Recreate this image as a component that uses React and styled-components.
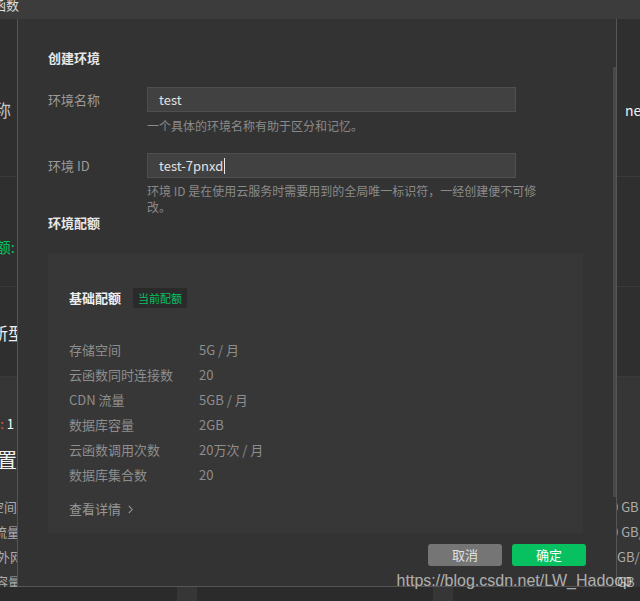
import React from 'react';
import styled, { createGlobalStyle } from 'styled-components';

const GlobalStyle = createGlobalStyle`
  html, body {
    margin: 0;
    padding: 0;
    background: #2b2b2b;
  }
  body {
    font-family: "Noto Sans CJK SC", "Microsoft YaHei", sans-serif;
  }
  * {
    box-sizing: border-box;
  }
`;

const Screen = styled.div`
  position: relative;
  width: 640px;
  height: 601px;
  overflow: hidden;
  display: flex;
  flex-direction: column;
  background: #2b2b2b;
`;

const TopBar = styled.div`
  height: 19px;
  flex: none;
  background: #3c3c3c;
  overflow: hidden;
  white-space: nowrap;

  span {
    display: block;
    margin: -3px 0 0 -20px;
    font-size: 13px;
    line-height: 16px;
    color: #dcdcdc;
  }
`;

const Main = styled.div`
  display: flex;
  height: 568px;
  flex: none;
`;

const Strip = styled.div`
  width: ${(p) => p.$w}px;
  flex: none;
  display: flex;
  flex-direction: column;
  overflow: hidden;
`;

const StripSection = styled.div`
  height: ${(p) => (p.$h ? `${p.$h}px` : 'auto')};
  flex: ${(p) => (p.$h ? 'none' : '1')};
  background: ${(p) => (p.$light ? '#363636' : '#2f2f2f')};
  border-bottom: ${(p) => (p.$light ? 'none' : '1px solid #3a3a3a')};
  display: flex;
  flex-direction: column;
  align-items: ${(p) => (p.$right ? 'flex-start' : 'flex-end')};
  padding-top: ${(p) => p.$pt || 0}px;
`;

const Frag = styled.div`
  white-space: nowrap;
  font-size: ${(p) => p.$size || 13}px;
  line-height: ${(p) => p.$lh || 20}px;
  color: ${(p) => p.$color || '#ababab'};
  margin: ${(p) => p.$m || '0'};
`;

const Dialog = styled.div`
  width: 600px;
  flex: none;
  height: 568px;
  background: #333333;
  border: 1px solid #555555;
  border-top: none;
  display: flex;
  flex-direction: column;
`;

const DialogBody = styled.div`
  flex: 1;
  display: flex;
  min-height: 0;
`;

const Content = styled.div`
  flex: 1;
  padding: 29px 30px 0 30px;
`;

const ScrollThumb = styled.div`
  width: 3px;
  height: 430px;
  margin-top: 48px;
  background: #494949;
  flex: none;
`;

const Title = styled.div`
  font-size: 13px;
  line-height: 20px;
  font-weight: 700;
  color: #e6e6e6;
  margin-top: ${(p) => p.$mt || 0}px;
`;

const FormRow = styled.div`
  display: grid;
  grid-template-columns: 99px 369px;
  align-items: center;
  margin-top: 19px;
`;

const Label = styled.div`
  font-size: 13px;
  line-height: 20px;
  color: #9a9a9a;
`;

const Input = styled.div`
  height: 25px;
  background: #414141;
  border: 1px solid #4f4f4f;
  padding: 0 11px;
  font-size: 13px;
  line-height: 23px;
  color: #e2e2e2;
  display: flex;
  align-items: center;
`;

const Caret = styled.span`
  display: inline-block;
  width: 1px;
  height: 16px;
  background: #e8e8e8;
  margin-left: 1px;
`;

const Hint = styled.div`
  grid-column: 2;
  width: 405px;
  font-size: 12px;
  line-height: 16px;
  color: #8a8a8a;
  margin-top: ${(p) => p.$mt || 6}px;
`;

const QuotaBox = styled.div`
  margin-top: 20px;
  width: 535px;
  height: 280px;
  background: #373737;
  padding: 35px 21px 0;
`;

const QuotaHead = styled.div`
  display: flex;
  align-items: center;
  gap: 12px;
  height: 20px;
`;

const QuotaName = styled.div`
  font-size: 13px;
  font-weight: 700;
  color: #eeeeee;
  line-height: 20px;
`;

const Tag = styled.div`
  height: 20px;
  padding: 0 5px;
  background: #2a2a2a;
  border-radius: 2px;
  font-size: 11px;
  line-height: 20px;
  color: #07c160;
`;

const QuotaList = styled.div`
  margin-top: 29px;
`;

const QuotaRow = styled.div`
  display: grid;
  grid-template-columns: 130px 1fr;
  font-size: 13px;
  line-height: 25px;
  color: #8e8e8e;
`;

const More = styled.div`
  margin-top: 12px;
  display: flex;
  align-items: center;
  gap: 7px;
  font-size: 13px;
  line-height: 20px;
  color: #969696;
`;

const Footer = styled.div`
  display: flex;
  justify-content: flex-end;
  gap: 10px;
  padding: 0 30px 20px 0;
`;

const Button = styled.div`
  width: 74px;
  height: 22px;
  border-radius: 3px;
  background: ${(p) => (p.$primary ? '#07c160' : '#757575')};
  color: ${(p) => (p.$primary ? '#ffffff' : '#e0e0e0')};
  font-size: 13px;
  line-height: 22px;
  text-align: center;
`;

const BottomStrip = styled.div`
  flex: 1;
  display: flex;
  background: #2b2b2b;
`;

const Block = styled.div`
  width: 20px;
  margin-left: ${(p) => p.$ml}px;
  background: #363636;
`;

const Watermark = styled.div`
  position: absolute;
  right: 8px;
  bottom: 10px;
  font-family: "Liberation Sans", Arial, sans-serif;
  font-size: 16px;
  line-height: 20px;
  color: rgba(255, 255, 255, 0.62);
  white-space: nowrap;
`;

const quotas = [
  ['存储空间', '5G / 月'],
  ['云函数同时连接数', '20'],
  ['CDN 流量', '5GB / 月'],
  ['数据库容量', '2GB'],
  ['云函数调用次数', '20万次 / 月'],
  ['数据库集合数', '20'],
];

const Chevron = () => (
  <svg width="5" height="9" viewBox="0 0 5 9" fill="none">
    <path d="M0.8 0.8L4.2 4.5L0.8 8.2" stroke="#969696" strokeWidth="1.1" />
  </svg>
);

export default function App() {
  return (
    <Screen>
      <GlobalStyle />
      <TopBar>
        <span>云函数</span>
      </TopBar>
      <Main>
        <Strip $w={17}>
          <StripSection $h={158} $pt={80}>
            <Frag $size={17} $lh={22} $color="#c4c4c4" $m="0 6px 0 0">名称</Frag>
          </StripSection>
          <StripSection $h={110} $pt={59}>
            <Frag $size={15} $lh={22} $color="#07c160" $m="0 2px 0 0">配额:</Frag>
          </StripSection>
          <StripSection $h={90} $pt={35}>
            <Frag $size={17} $lh={22} $color="#eeeeee" $m="0 -8px 0 0">最新型</Frag>
          </StripSection>
          <StripSection $light $pt={37}>
            <Frag $size={13} $color="#ffffff" $m="0 3px 0 0">
              <span style={{ color: '#e0603a' }}>:</span> 1
            </Frag>
            <Frag $size={20} $lh={30} $color="#f2f2f2" $m="11px 0 0 0">配置</Frag>
            <Frag $lh={25} $m="19px 0 0 0">空间</Frag>
            <Frag $lh={25} $m="0 -3px 0 0">流量</Frag>
            <Frag $lh={25} $m="0 -6px 0 0">外网</Frag>
            <Frag $lh={25} $m="0 -4px 0 0">容量</Frag>
          </StripSection>
        </Strip>

        <Dialog>
          <DialogBody>
            <Content>
              <Title>创建环境</Title>
              <FormRow>
                <Label>环境名称</Label>
                <Input>test</Input>
                <Hint>一个具体的环境名称有助于区分和记忆。</Hint>
              </FormRow>
              <FormRow>
                <Label>环境 ID</Label>
                <Input>
                  test-7pnxd
                  <Caret />
                </Input>
                <Hint $mt={5}>环境 ID 是在使用云服务时需要用到的全局唯一标识符，一经创建便不可修改。</Hint>
              </FormRow>
              <Title $mt={-2}>环境配额</Title>
              <QuotaBox>
                <QuotaHead>
                  <QuotaName>基础配额</QuotaName>
                  <Tag>当前配额</Tag>
                </QuotaHead>
                <QuotaList>
                  {quotas.map(([k, v]) => (
                    <QuotaRow key={k}>
                      <span>{k}</span>
                      <span>{v}</span>
                    </QuotaRow>
                  ))}
                </QuotaList>
                <More>
                  查看详情
                  <Chevron />
                </More>
              </QuotaBox>
            </Content>
            <ScrollThumb />
          </DialogBody>
          <Footer>
            <Button>取消</Button>
            <Button $primary>确定</Button>
          </Footer>
        </Dialog>

        <Strip $w={23}>
          <StripSection $h={158} $pt={80} $right>
            <Frag $size={14} $lh={22} $color="#f0f0f0" $m="0 0 0 8px">network</Frag>
          </StripSection>
          <StripSection $h={110} $right />
          <StripSection $h={90} $right />
          <StripSection $light $right $pt={117}>
            <Frag $lh={25} $m="0 0 0 -6px">0 GB</Frag>
            <Frag $lh={25} $m="0 0 0 -6px">0 GB/月</Frag>
            <Frag $lh={25} $m="0 0 0 0">GB/月</Frag>
            <Frag $lh={25} $m="0 0 0 0">GB</Frag>
          </StripSection>
        </Strip>
      </Main>
      <BottomStrip>
        <Block $ml={177} />
        <Block $ml={236} />
      </BottomStrip>
      <Watermark>https://blog.csdn.net/LW_Hadoop</Watermark>
    </Screen>
  );
}
